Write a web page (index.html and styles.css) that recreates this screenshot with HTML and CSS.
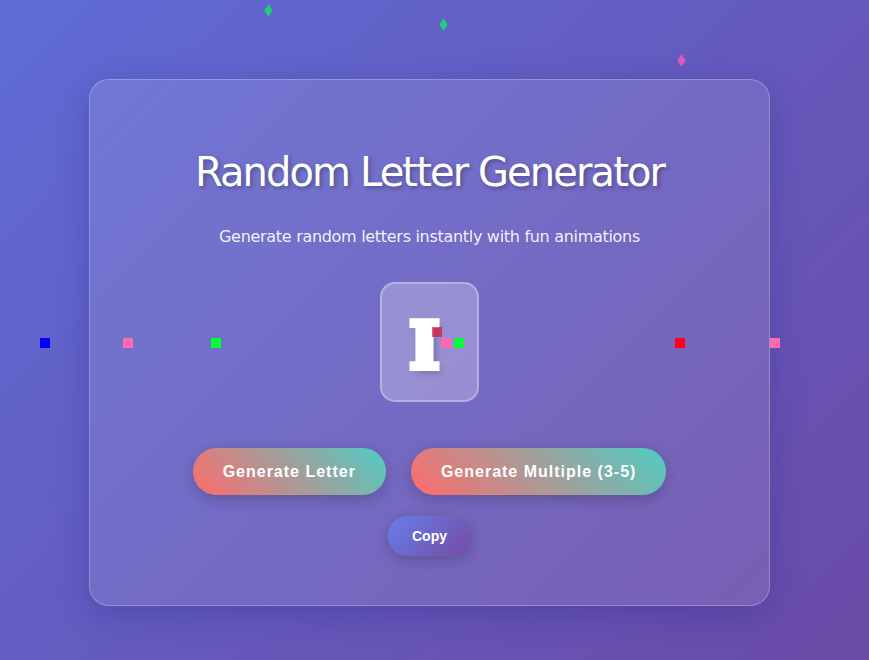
FILE: index.html
```html
<!DOCTYPE html>
<html lang="en">
<head>
<meta charset="utf-8">
<title>Random Letter Generator</title>
<link rel="stylesheet" href="styles.css">
</head>
<body>
  <main class="card">
    <h1 class="title">Random Letter Generator</h1>
    <p class="subtitle">Generate random letters instantly with fun animations</p>
    <div class="letter-box"><span class="letter">I</span></div>
    <div class="actions">
      <button class="btn btn-primary">Generate Letter</button>
      <button class="btn btn-primary">Generate Multiple (3-5)</button>
    </div>
    <button class="btn btn-copy">Copy</button>
  </main>

  <div class="confetti diamond green c1"></div>
  <div class="confetti diamond green c2"></div>
  <div class="confetti diamond magenta c3"></div>

  <div class="confetti square blue c4"></div>
  <div class="confetti square pink c5"></div>
  <div class="confetti square lime c6"></div>
  <div class="confetti square crimson c7"></div>
  <div class="confetti square pink c8"></div>
  <div class="confetti square lime c9"></div>
  <div class="confetti square red c10"></div>
  <div class="confetti square pink c11"></div>
</body>
</html>
```
FILE: styles.css
```css
* { box-sizing: border-box; }

html, body { height: 100%; }

body {
  margin: 0;
  min-height: 100vh;
  background: linear-gradient(135deg, #5f6cd6 0%, #6a4aa6 100%);
  font-family: "DejaVu Sans", Verdana, sans-serif;
  display: flex;
  justify-content: center;
  align-items: flex-start;
  padding: 79px 10px 0 0;
  overflow: hidden;
}

.card {
  width: 681px;
  height: 527px;
  background: rgba(255, 255, 255, 0.1);
  border: 1px solid rgba(255, 255, 255, 0.25);
  border-radius: 20px;
  box-shadow: 0 8px 32px rgba(31, 38, 135, 0.3);
  display: flex;
  flex-direction: column;
  align-items: center;
  padding-top: 68px;
}

.title {
  margin: 0;
  font-size: 40px;
  line-height: 48px;
  font-weight: normal;
  color: #fff;
  letter-spacing: -1.9px;
  text-shadow: 2px 2px 4px rgba(0, 0, 0, 0.3);
}

.subtitle {
  margin: 31px 0 0;
  font-size: 16px;
  line-height: 20px;
  color: rgba(255, 255, 255, 0.92);
  letter-spacing: -0.3px;
}

.letter-box {
  margin-top: 35px;
  width: 99px;
  height: 120px;
  border-radius: 15px;
  background: rgba(255, 255, 255, 0.25);
  border: 2px solid rgba(255, 255, 255, 0.3);
  display: flex;
  align-items: center;
  justify-content: center;
}

.letter {
  font-family: "DejaVu Serif", "Liberation Serif", serif;
  font-weight: 900;
  font-size: 64px;
  line-height: 1;
  color: #fff;
  -webkit-text-stroke: 6px #fff;
  text-shadow: 4px 4px 7px rgba(0, 0, 0, 0.3);
  margin: 8px 10px 0 0;
}

.actions {
  margin-top: 46px;
  display: flex;
  gap: 25px;
}

.btn {
  border: none;
  color: #fff;
  font-family: "Liberation Sans", Arial, sans-serif;
  font-weight: bold;
  cursor: pointer;
}

.btn-primary {
  height: 47px;
  padding: 0 30px;
  border-radius: 24px;
  font-size: 16px;
  letter-spacing: 1px;
  background: linear-gradient(45deg, #ff6b6b, #4ecdc4);
  box-shadow: 0 4px 15px rgba(0, 0, 0, 0.2);
}

.btn-copy {
  margin-top: 21px;
  height: 40px;
  width: 84px;
  border-radius: 20px;
  font-size: 14px;
  background: linear-gradient(135deg, #667eea 0%, #764ba2 100%);
  box-shadow: 0 4px 15px rgba(0, 0, 0, 0.2);
}

.confetti {
  position: absolute;
  width: 10px;
  height: 10px;
}

.diamond { width: 9px; height: 9px; transform: scaleX(0.65) rotate(45deg); }

.green { background: #1fd071; }
.magenta { background: #dc5bb8; }
.blue { background: #0000ff; }
.pink { background: #ff69b4; }
.lime { background: #00ff3a; }
.red { background: #ff0018; }
.crimson { background: rgba(220, 20, 60, 0.7); }

.c1 { left: 264px; top: 6px; }
.c2 { left: 439px; top: 20px; }
.c3 { left: 677px; top: 56px; }
.c4 { left: 40px; top: 338px; }
.c5 { left: 123px; top: 338px; }
.c6 { left: 211px; top: 338px; }
.c7 { left: 432px; top: 327px; }
.c8 { left: 441px; top: 338px; }
.c9 { left: 454px; top: 338px; }
.c10 { left: 675px; top: 338px; }
.c11 { left: 770px; top: 338px; }
```
